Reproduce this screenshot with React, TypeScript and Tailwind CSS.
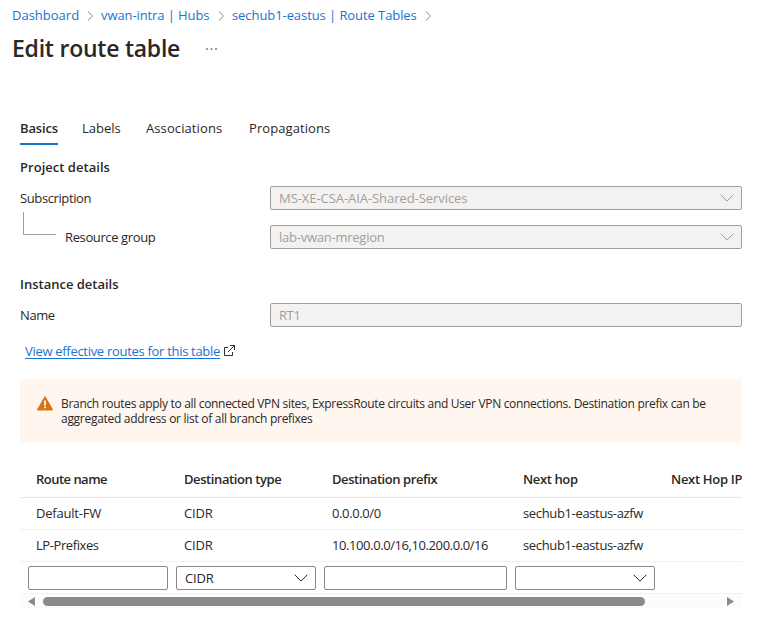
import type { ReactNode } from "react";

function Chevron({ className = "" }: { className?: string }) {
  return (
    <svg width="14" height="8" viewBox="0 0 14 8" fill="none" stroke="currentColor" className={className}>
      <path d="M0.6 0.7L7 7.1L13.4 0.7" />
    </svg>
  );
}

function Crumb({ children, className }: { children: string; className: string }) {
  return (
    <>
      <a className={`shrink-0 whitespace-pre text-[#1a73d1] ${className}`}>{children}</a>
      <svg width="7" height="10" viewBox="0 0 7 10" fill="none" stroke="#8a8886" className="mx-[7.5px] mt-px shrink-0">
        <path d="M1 0.6L5.6 5L1 9.4" />
      </svg>
    </>
  );
}

function DisabledField({ value, tracking, dropdown }: { value: string; tracking: string; dropdown?: boolean }) {
  return (
    <div className="flex h-6 w-[472px] shrink-0 items-center justify-between rounded-xs border border-[#a19f9d] bg-[#f3f2f1] pr-[7.5px] pl-2 text-[#a19f9d]">
      <span className={tracking}>{value}</span>
      {dropdown && <Chevron />}
    </div>
  );
}

function Row({ children, className }: { children: ReactNode; className: string }) {
  return <div className={`grid w-[800px] grid-cols-[148px_148px_191px_148px_165px] items-center ${className}`}>{children}</div>;
}

function Cell({ children, className = "" }: { children?: string; className?: string }) {
  return <div className={`pb-0.5 pl-4 whitespace-nowrap ${className}`}>{children}</div>;
}

function Box({ children, className = "" }: { children?: ReactNode; className?: string }) {
  return (
    <div className={`ml-2 flex h-6 items-center justify-between rounded-xs border border-[#8a8886] bg-white pr-[7.5px] pl-2 ${className}`}>
      {children}
    </div>
  );
}

export default function App() {
  return (
    <div className="h-[635px] w-[783px] overflow-hidden bg-white font-['Open_Sans','Noto_Sans',sans-serif] text-[13px] leading-[18px] text-[#292827]">
      <nav className="flex h-[30px] items-center pl-3">
        <Crumb className="w-[67px]">Dashboard</Crumb>
        <Crumb className="w-[109px] tracking-[-0.09px]">vwan-intra | Hubs</Crumb>
        <Crumb className="w-[185px] tracking-[-0.075px]">sechub1-eastus | Route Tables</Crumb>
      </nav>
      <header className="flex h-9 items-center pl-3">
        <h1 className="w-[193px] text-[23px] leading-8 font-semibold tracking-[-0.24px]">Edit route table</h1>
        <svg width="14" height="4" viewBox="0 0 14 4" fill="#605e5c" className="mt-0.5">
          <path d="M1.2 1.2h1.6v1.6H1.2zM5.7 1.2h1.6v1.6H5.7zM10.2 1.2h1.6v1.6h-1.6z" />
        </svg>
      </header>

      <main className="ml-5 w-[722px] pt-[50px]">
        <div className="flex h-[29px] leading-6">
          <div className="w-[38px] border-b-2 border-[#1a73d1] font-semibold tracking-[-0.14px]">Basics</div>
          <div className="ml-6 w-[40px] tracking-[-0.02px]">Labels</div>
          <div className="ml-6 w-[77px] tracking-[0.1px]">Associations</div>
          <div className="ml-[26px] tracking-[0.08px]">Propagations</div>
        </div>

        <h2 className="mt-[13px] font-semibold tracking-[0.03px]">Project details</h2>
        <div className="mt-[10px] flex h-6 items-center justify-between">
          <span className="tracking-[-0.39px]">Subscription</span>
          <DisabledField value="MS-XE-CSA-AIA-Shared-Services" tracking="tracking-[-0.06px]" dropdown />
        </div>
        <div className="mt-[2px] flex h-[37px] items-end justify-between">
          <div className="flex h-full">
            <div className="ml-[3px] h-[23px] w-[33px] border-b border-l border-[#a19f9d]" />
            <span className="ml-[9px] self-end pb-[3px] tracking-[-0.38px]">Resource group</span>
          </div>
          <DisabledField value="lab-vwan-mregion" tracking="tracking-[-0.24px]" dropdown />
        </div>

        <h2 className="mt-[26px] font-semibold tracking-[-0.01px]">Instance details</h2>
        <div className="mt-[10px] flex h-6 items-center justify-between">
          <span className="tracking-[-0.4px]">Name</span>
          <DisabledField value="RT1" tracking="tracking-[-0.4px]" />
        </div>

        <div className="mt-[15px] ml-[5px] flex h-[18px] items-center">
          <a className="h-4 w-[195px] border-b border-[#1a73d1] leading-4 whitespace-nowrap text-[#1a73d1] tracking-[-0.3px]">
            View effective routes for this table
          </a>
          <svg width="11" height="11" viewBox="0 0 11 11" fill="none" stroke="#323130" className="ml-1 -mt-px">
            <path d="M4 2.5H0.5V10.5H8.5V7M6 0.5H10.5V5M10.5 0.5L4 7" />
          </svg>
        </div>

        <div className="mt-[19px] flex h-16 rounded-xs bg-[#fff6f0] pt-4 pl-[17px]">
          <svg width="16" height="15" viewBox="0 0 16 15" className="mt-px shrink-0">
            <path d="M8 1L15.2 13.7H0.8Z" fill="#db7315" stroke="#db7315" strokeWidth="1.4" strokeLinejoin="round" />
            <path d="M7.1 4.5h1.8v5H7.1zM7.1 10.5h1.8v1.8H7.1z" fill="#fff" />
          </svg>
          <p className="mt-px ml-2 text-[12px] leading-[15px] whitespace-nowrap">
            <span className="block tracking-[-0.314px]">
              Branch routes apply to all connected VPN sites, ExpressRoute circuits and User VPN connections. Destination prefix can be
            </span>
            <span className="block tracking-[-0.285px]">aggregated address or list of all branch prefixes</span>
          </p>
        </div>

        <section className="mt-[19px] overflow-hidden">
          <Row className="h-9 border-b border-[#e6e5e4] font-semibold">
            <Cell className="tracking-[-0.52px]">Route name</Cell>
            <Cell className="tracking-[-0.41px]">Destination type</Cell>
            <Cell className="tracking-[-0.43px]">Destination prefix</Cell>
            <Cell className="tracking-[-0.38px]">Next hop</Cell>
            <Cell className="tracking-[-0.3px]">Next Hop IP</Cell>
          </Row>
          <Row className="h-8 border-b border-[#f1f0ef]">
            <Cell className="tracking-[-0.21px]">Default-FW</Cell>
            <Cell className="tracking-[-0.15px]">CIDR</Cell>
            <Cell className="tracking-[-0.38px]">0.0.0.0/0</Cell>
            <Cell className="tracking-[-0.35px]">sechub1-eastus-azfw</Cell>
          </Row>
          <Row className="h-8 border-b border-[#f1f0ef]">
            <Cell className="tracking-[-0.42px]">LP-Prefixes</Cell>
            <Cell className="tracking-[-0.15px]">CIDR</Cell>
            <Cell className="tracking-[-0.41px]">10.100.0.0/16,10.200.0.0/16</Cell>
            <Cell className="tracking-[-0.35px]">sechub1-eastus-azfw</Cell>
          </Row>
          <Row className="h-8 border-b border-[#f1f0ef]">
            <Box />
            <Box>
              <span className="tracking-[-0.15px]">CIDR</span>
              <Chevron />
            </Box>
            <Box />
            <Box>
              <span />
              <Chevron />
            </Box>
          </Row>
          <div className="flex h-[15px] items-center bg-[#fcfcfc] pr-2 pl-2">
            <svg width="7" height="9" viewBox="0 0 7 9" fill="#8b8b8b">
              <path d="M7 0V9L0 4.5Z" />
            </svg>
            <div className="ml-2 h-[9px] w-[602px] rounded-full bg-[#8b8b8b]" />
            <svg width="7" height="9" viewBox="0 0 7 9" fill="#8b8b8b" className="ml-auto">
              <path d="M0 0V9L7 4.5Z" />
            </svg>
          </div>
        </section>
      </main>
    </div>
  );
}
